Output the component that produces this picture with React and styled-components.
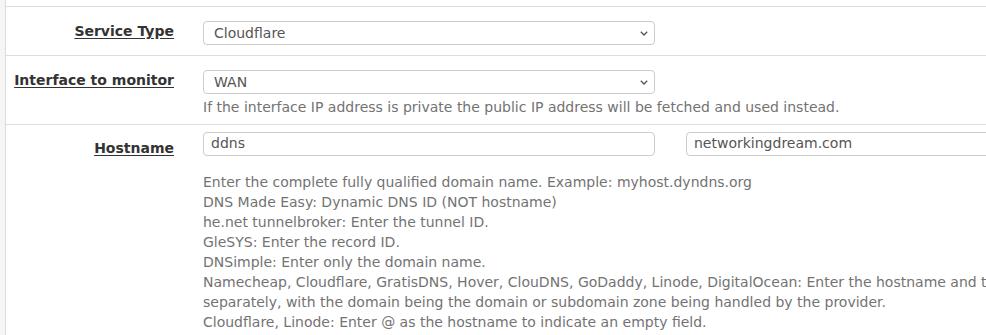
import React from 'react';
import styled, { createGlobalStyle } from 'styled-components';

const GlobalStyle = createGlobalStyle`
  body {
    margin: 0;
    background: #ffffff;
    font-family: "DejaVu Sans", "Liberation Sans", sans-serif;
    font-size: 14px;
    line-height: 20px;
    color: #333333;
    overflow: hidden;
  }
`;

const helpLines = [
  'Enter the complete fully qualified domain name. Example: myhost.dyndns.org',
  'DNS Made Easy: Dynamic DNS ID (NOT hostname)',
  'he.net tunnelbroker: Enter the tunnel ID.',
  'GleSYS: Enter the record ID.',
  'DNSimple: Enter only the domain name.',
  'Namecheap, Cloudflare, GratisDNS, Hover, ClouDNS, GoDaddy, Linode, DigitalOcean: Enter the hostname and the domain',
  'separately, with the domain being the domain or subdomain zone being handled by the provider.',
  'Cloudflare, Linode: Enter @ as the hostname to indicate an empty field.',
];

const App = () => {
  return (
    <>
      <GlobalStyle />
      <Page>
        <Gutter />
        <Panel>
          <Spacer />
          <FormRow $top={14} $bottom={10}>
            <LabelCol $pt={0}>
              <Label>Service Type</Label>
            </LabelCol>
            <FieldCol>
              <Select value="Cloudflare" />
            </FieldCol>
          </FormRow>

          <FormRow $top={14} $bottom={7}>
            <LabelCol $pt={0}>
              <Label>Interface to monitor</Label>
            </LabelCol>
            <FieldCol>
              <Select value="WAN" />
              <Help $mt={3}>
                If the interface IP address is private the public IP address will be fetched and used instead.
              </Help>
            </FieldCol>
          </FormRow>

          <FormRow $top={7} $bottom={0}>
            <LabelCol $pt={6}>
              <Label>Hostname</Label>
            </LabelCol>
            <FieldCol>
              <InputPair>
                <TextInput>ddns</TextInput>
                <TextInput>networkingdream.com</TextInput>
              </InputPair>
              <Help $mt={16}>
                {helpLines.map((line) => (
                  <div key={line}>{line}</div>
                ))}
              </Help>
            </FieldCol>
          </FormRow>
        </Panel>
      </Page>
    </>
  );
};

// Select box with a small chevron on the right
const Select = ({ value }) => (
  <SelectBox>
    <span>{value}</span>
    <Chevron viewBox="0 0 8 5" width="8" height="5">
      <path d="M0.8 0.8 L4 4 L7.2 0.8" fill="none" stroke="#555" strokeWidth="1.3" />
    </Chevron>
  </SelectBox>
);

// Styled components
const Page = styled.div`
  display: flex;
  width: 986px;
  height: 335px;
  overflow: hidden;
`;

const Gutter = styled.div`
  width: 5px;
  flex: none;
  background-color: #f5f5f5;
  border-right: 1px solid #dddddd;
`;

const Panel = styled.div`
  flex: 1;
  min-width: 0;
`;

const Spacer = styled.div`
  height: 6px;
`;

const FormRow = styled.div`
  display: flex;
  border-top: 1px solid #dddddd;
  padding-top: ${({ $top }) => $top}px;
  padding-bottom: ${({ $bottom }) => $bottom}px;
`;

const LabelCol = styled.div`
  width: 168px;
  flex: none;
  text-align: right;
  padding-top: ${({ $pt }) => $pt}px;
  padding-right: 15px;
`;

const Label = styled.span`
  font-weight: bold;
  color: #333333;
  text-decoration: underline;
  text-underline-offset: 2px;
  white-space: nowrap;
`;

const FieldCol = styled.div`
  flex: 1;
  min-width: 0;
  padding-left: 14px;
`;

const SelectBox = styled.div`
  box-sizing: border-box;
  width: 452px;
  height: 24px;
  display: flex;
  align-items: center;
  justify-content: space-between;
  padding: 0 6px 0 10px;
  border: 1px solid #cccccc;
  border-radius: 4px;
  background: #ffffff;
  color: #555555;
  font-size: 14px;
`;

const Chevron = styled.svg`
  display: block;
`;

const InputPair = styled.div`
  display: flex;
  gap: 31px;
`;

const TextInput = styled.div`
  box-sizing: border-box;
  flex: none;
  width: 452px;
  height: 24px;
  display: flex;
  align-items: center;
  padding: 0 7px 2px;
  border: 1px solid #cccccc;
  border-radius: 4px;
  background: #ffffff;
  color: #555555;
  font-size: 14px;
`;

const Help = styled.div`
  margin-top: ${({ $mt }) => $mt}px;
  color: #737373;
  font-size: 14px;
  line-height: 20px;
  white-space: nowrap;
`;

export default App;
